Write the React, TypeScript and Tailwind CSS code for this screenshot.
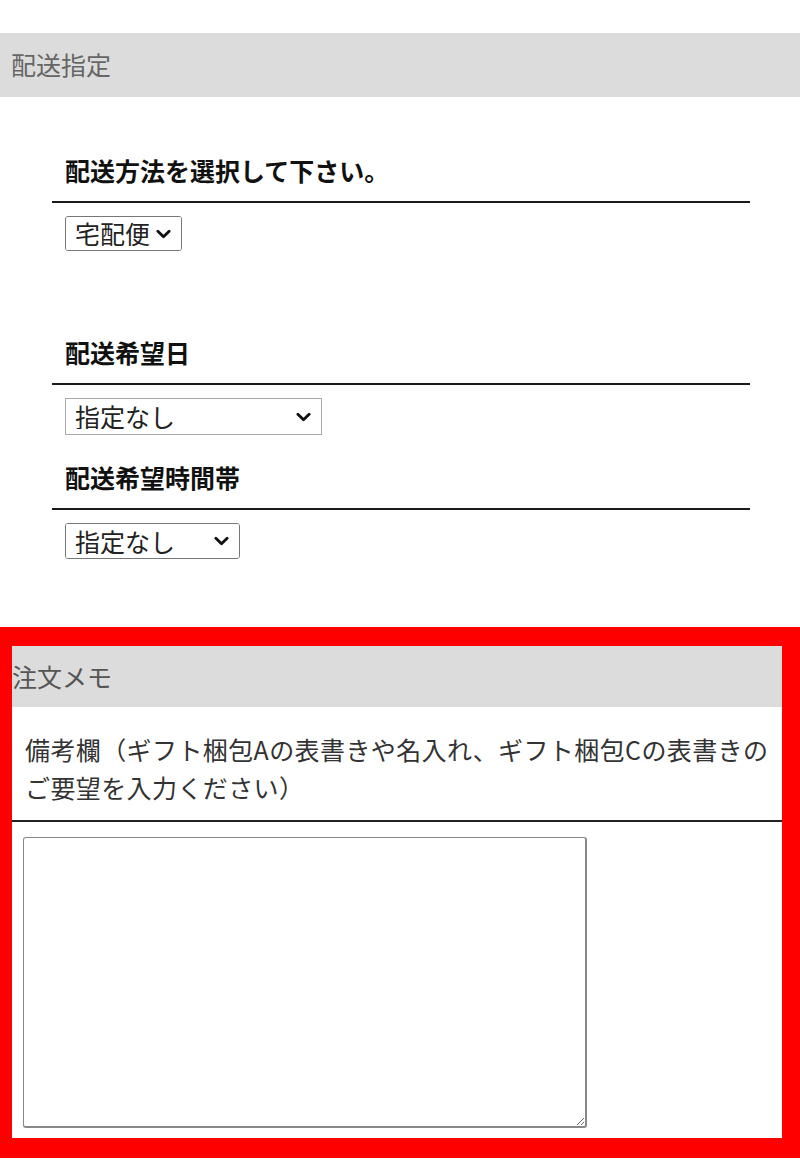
import { useState } from "react";

const FONT = "font-['Noto_Sans_CJK_JP','Noto_Sans',sans-serif]";

function Chevron({ className = "" }: { className?: string }) {
  return (
    <svg viewBox="0 0 16 10" className={`w-[15px] h-[10px] ${className}`} fill="none">
      <path d="M2 2 L8 8 L14 2" stroke="#111" strokeWidth="3" strokeLinecap="round" strokeLinejoin="round" />
    </svg>
  );
}

function Select({
  value,
  options,
  onChange,
  className,
}: {
  value: string;
  options: string[];
  onChange: (v: string) => void;
  className: string;
}) {
  return (
    <div className={`relative ${className}`}>
      <select
        value={value}
        onChange={(e) => onChange(e.target.value)}
        className="appearance-none w-full h-full bg-white pl-[9px] text-[25px] leading-none text-[#222] outline-none"
      >
        {options.map((o) => (
          <option key={o}>{o}</option>
        ))}
      </select>
      <Chevron className="absolute right-[10px] top-1/2 -translate-y-1/2 pointer-events-none" />
    </div>
  );
}

function Field({ title, children, gap }: { title: string; children: React.ReactNode; gap: string }) {
  return (
    <div className={gap}>
      <h3 className="pl-[13px] h-9 flex items-center text-[25px] font-bold text-[#111]">{title}</h3>
      <div className="mt-3 h-[2px] bg-[#1a1a1a]" />
      <div className="mt-[13px] pl-[13px]">{children}</div>
    </div>
  );
}

export default function App() {
  const [method, setMethod] = useState("宅配便");
  const [date, setDate] = useState("指定なし");
  const [time, setTime] = useState("指定なし");
  const [memo, setMemo] = useState("");

  return (
    <div className={`w-[800px] min-h-[1174px] bg-white ${FONT}`}>
      <div className="pt-[33px]">
        <div className="h-16 bg-[#dcdcdc] flex items-center pl-[11px] text-[25px] text-[#666]">配送指定</div>
      </div>

      <div className="pl-[52px] pr-[50px]">
        <Field title="配送方法を選択して下さい。" gap="mt-14">
          <Select
            value={method}
            onChange={setMethod}
            options={["宅配便", "メール便"]}
            className="w-[117px] h-[35px] border border-[#777] rounded-[3px] overflow-hidden"
          />
        </Field>
        <Field title="配送希望日" gap="mt-[84px]">
          <Select
            value={date}
            onChange={setDate}
            options={["指定なし"]}
            className="w-[257px] h-[37px] border border-[#aaa]"
          />
        </Field>
        <Field title="配送希望時間帯" gap="mt-[25px]">
          <Select
            value={time}
            onChange={setTime}
            options={["指定なし", "午前中", "14時〜16時", "16時〜18時", "18時〜20時"]}
            className="w-[175px] h-[36px] border border-[#777] rounded-[3px] overflow-hidden"
          />
        </Field>
      </div>

      <div className="mt-[68px] border-[#ff0000] border-l-[12px] border-t-[19px] border-r-[18px] border-b-[20px] bg-white">
        <div className="h-[61px] bg-[#dcdcdc] flex items-center text-[25px] text-[#555]">注文メモ</div>
        <p className="pt-[23px] pl-[13px] pr-2 text-[25px] tracking-[0.4px] leading-[38px] text-[#333]">
          備考欄（ギフト梱包Aの表書きや名入れ、ギフト梱包Cの表書きのご要望を入力ください）
        </p>
        <div className="mt-[14px] h-[2px] bg-[#222]" />
        <div className="pt-[15px] pb-[10px] pl-[11px]">
          <textarea
            value={memo}
            onChange={(e) => setMemo(e.target.value)}
            className="block w-[564px] h-[291px] border border-[#888] border-b-2 border-r-2 rounded-[3px] resize outline-none"
          />
        </div>
      </div>
    </div>
  );
}
